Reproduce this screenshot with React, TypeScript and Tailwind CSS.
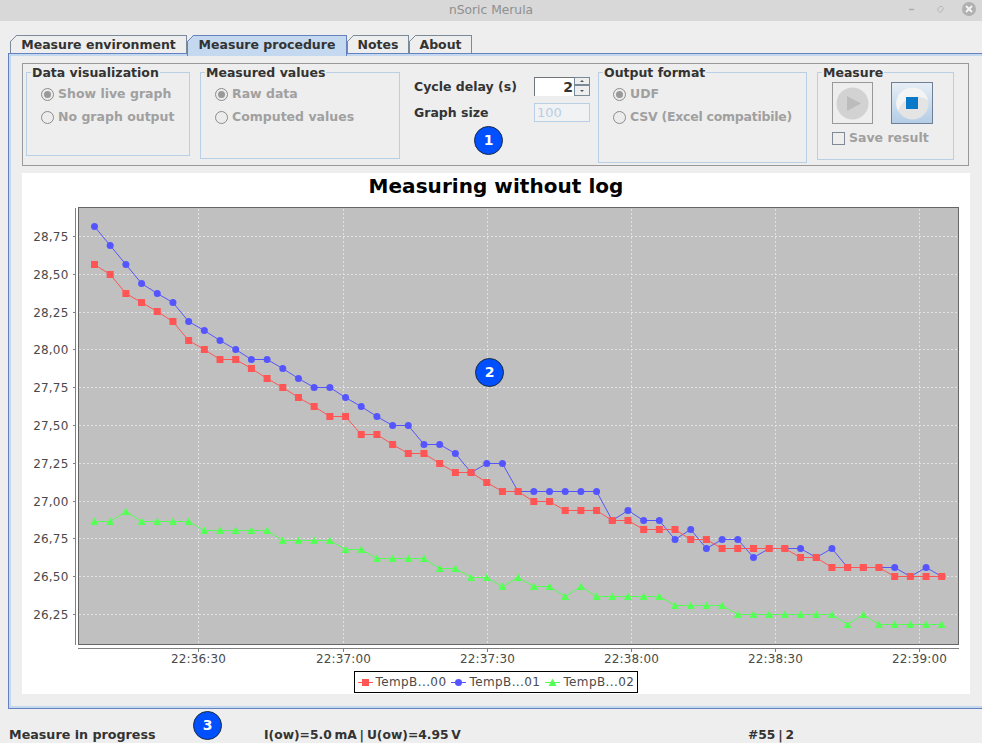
import React from "react";

const red = [264,274,293,302,311,321,340,349,359,359,368,378,387,397,406,416,416,434,434,444,453,453,463,472,472,482,491,491,501,501,510,510,510,520,520,529,529,529,539,539,548,548,548,548,548,557,557,567,567,567,567,576,576,576,576];
const blue = [226,245,264,283,293,302,321,330,340,349,359,359,368,378,387,387,397,406,416,425,425,444,444,453,472,463,463,491,491,491,491,491,491,520,510,520,520,539,529,548,539,539,557,548,548,548,557,548,567,567,567,567,576,567,576];
const green = [521,521,511,521,521,521,521,530,530,530,530,530,540,540,540,540,549,549,558,558,558,558,568,568,577,577,586,577,586,586,596,586,596,596,596,596,596,605,605,605,605,614,614,614,614,614,614,614,624,614,624,624,624,624,624];
const px = (i: number) => 94.5 + i * 15.69;
const pts = (a: number[]) => a.map((y, i) => `${px(i).toFixed(1)},${y + 0.5}`).join(" ");
const yLabels = ["28,75","28,50","28,25","28,00","27,75","27,50","27,25","27,00","26,75","26,50","26,25"];
const yTick = (i: number) => Math.round(236 + i * 37.8) + 0.5;
const xTicks: [number, string][] = [[198.5,"22:36:30"],[343.5,"22:37:00"],[487.5,"22:37:30"],[631.5,"22:38:00"],[775.5,"22:38:30"],[919.5,"22:39:00"]];
const tri = (x: number, y: number) => `${x},${y - 4} ${x + 4},${y + 3.5} ${x - 4},${y + 3.5}`;

function Radio({ label, checked, className }: { label: string; checked?: boolean; className?: string }) {
  return (
    <div className="flex items-center h-[23px] gap-[4px] text-[#a0a0a0] whitespace-nowrap">
      <span className="w-[13px] h-[13px] rounded-full border border-[#8c8c8c] flex items-center justify-center shrink-0 bg-[#ececec]">
        {checked && <span className="w-[7px] h-[7px] rounded-full bg-[#999999]" />}
      </span>
      <span className={className}>{label}</span>
    </div>
  );
}

function Group({ title, className, children }: { title: string; className: string; children?: React.ReactNode }) {
  return (
    <fieldset className={`border border-[#b8cfe5] shrink-0 ${className}`}>
      <legend className="ml-[4px] px-[1px] leading-[15px] text-[#333333]">{title}</legend>
      {children}
    </fieldset>
  );
}

function Tab({ label, className, active }: { label: string; className: string; active?: boolean }) {
  return (
    <div className={`relative shrink-0 flex justify-center border-l border-t border-r leading-[17px] text-[#333333] ${active ? "h-[21px] bg-[#c4d9f0] border-[#6382bf]" : "h-[18px] border-[#7a8a99]"} ${className}`}>
      <svg className="absolute -left-px -top-px" width="7" height="7" viewBox="0 0 7 7">
        <path d="M0 0H6.5L0 6.5Z" fill="#eeeeee" />
        <path d="M0.5 6.5L6.5 0.5" stroke={active ? "#6382bf" : "#7a8a99"} fill="none" />
      </svg>
      {label}
    </div>
  );
}

function Badge({ n, className }: { n: number; className: string }) {
  return (
    <div className={`absolute w-[29px] h-[29px] rounded-full bg-[#0050ff] border border-[#1a2a40] text-white text-[14px] font-bold flex items-center justify-center ${className}`}>
      {n}
    </div>
  );
}

function LegendItem({ kind, color, label }: { kind: "s" | "c" | "t"; color: string; label: string }) {
  return (
    <div className="flex items-center gap-[3px]">
      <svg width="15" height="9" viewBox="0 0 15 9">
        <path d="M0 4.5H15" stroke={color} />
        {kind === "s" && <rect x="4" y="1" width="7" height="7" fill={color} />}
        {kind === "c" && <circle cx="7.5" cy="4.5" r="3.5" fill={color} />}
        {kind === "t" && <polygon points="7.5,0.5 11.5,8 3.5,8" fill={color} />}
      </svg>
      <span>{label}</span>
    </div>
  );
}

export default function App() {
  return (
    <div className="relative w-[982px] h-[743px] overflow-hidden bg-[#eeeeee] font-['DejaVu_Sans',sans-serif] font-bold text-[12.5px] text-[#333333]">
      <div className="relative h-[21px] bg-[#d8d8d8] flex items-center justify-center font-normal text-[12.3px] text-[#8f8f8f]">
        nSoric Merula
        <svg className="absolute right-0 top-0" width="90" height="21" viewBox="0 0 90 21">
          <path d="M17 9.5H22" stroke="#adadad" strokeWidth="1.5" />
          <path d="M46 11V8.5L48 6.5H50.5M51 7.5V10L49 12H46.5" stroke="#b5b5b5" fill="none" />
          <circle cx="77" cy="9" r="7" fill="#b0b0b0" />
          <path d="M74 6L80 12M80 6L74 12" stroke="#f4f4f4" strokeWidth="2" />
        </svg>
      </div>

      <div className="relative z-10 mt-[14px] ml-[10px] flex items-start h-[18px]">
        <Tab label="Measure environment" className="w-[177px]" />
        <Tab label="Measure procedure" className="w-[160px]" active />
        <Tab label="Notes" className="w-[62px]" />
        <Tab label="About" className="w-[63px]" />
      </div>

      <div className="ml-[8px] w-[980px] h-[656px] border border-[#6382bf]">
        <div className="h-full border-2 border-[#c4d9f0] pl-[11px] pt-[7px]">
          <div className="w-[947px] h-[103px] border border-[#999999] flex items-start pl-[3px] pt-px">
            <Group title="Data visualization" className="w-[164px] h-[91px]">
              <div className="pt-[3px] pl-[14px]">
                <Radio label="Show live graph" checked />
                <Radio label="No graph output" />
              </div>
            </Group>
            <Group title="Measured values" className="ml-[10px] w-[200px] h-[94px]">
              <div className="pt-[3px] pl-[14px]">
                <Radio label="Raw data" checked />
                <Radio label="Computed values" />
              </div>
            </Group>
            <div className="ml-[14px] w-[176px] pt-[12px] shrink-0">
              <div className="flex items-center justify-between h-[19px]">
                <span className="pt-[2px]">Cycle delay (s)</span>
                <div className="flex w-[56px] h-[19px]">
                  <div className="w-[40px] bg-white border-l border-t border-[#70757c] text-right pr-px leading-[18px] text-[14px]">2</div>
                  <div className="w-[16px] flex flex-col border border-[#7a8a99] bg-[#eeeeee]">
                    <div className="h-[8px] border-b-2 border-[#7a8a99] flex items-center justify-center">
                      <span className="w-0 h-0 border-x-[2px] border-x-transparent border-b-[2px] border-b-[#555555]" />
                    </div>
                    <div className="flex-1 flex items-center justify-center">
                      <span className="w-0 h-0 border-x-[2px] border-x-transparent border-t-[2px] border-t-[#555555]" />
                    </div>
                  </div>
                </div>
              </div>
              <div className="flex items-center justify-between h-[19px] mt-[7px]">
                <span className="pt-[2px]">Graph size</span>
                <div className="w-[56px] h-[19px] bg-[#f0f2f4] border border-[#b8cfe5] pl-[2px] font-normal text-[13px] leading-[17px] text-[#b8cfe5]">100</div>
              </div>
            </div>
            <Group title="Output format" className="ml-[8px] w-[209px] h-[98px]">
              <div className="pt-[3px] pl-[14px]">
                <Radio label="UDF" checked />
                <Radio label="CSV (Excel compatibile)" className="tracking-[-0.25px]" />
              </div>
            </Group>
            <Group title="Measure" className="ml-[10px] w-[137px] h-[95px]">
              <div className="pl-[14px]">
                <div className="flex gap-[18px] pt-[2px]">
                  <div className="w-[41px] h-[42px] border border-[#999999] flex items-center justify-center">
                    <svg width="33" height="33" viewBox="0 0 33 33">
                      <circle cx="16.5" cy="16.5" r="16" fill="#d2d2d2" />
                      <path d="M11 9L25 16.5L11 24Z" fill="#bcbcbc" />
                    </svg>
                  </div>
                  <div className="w-[42px] h-[42px] border border-[#6e7f96] bg-gradient-to-b from-[#e6eef6] to-[#b4cde6] flex items-center justify-center">
                    <svg width="33" height="33" viewBox="0 0 33 33">
                      <circle cx="16.5" cy="16.5" r="16" fill="#e4e4e4" />
                      <path d="M16.5 0.5A16 16 0 0 0 2 24A20 20 0 0 1 32 13A16 16 0 0 0 16.5 0.5Z" fill="#f4f4f4" />
                      <rect x="10" y="10" width="12" height="12" fill="#0a78c8" />
                    </svg>
                  </div>
                </div>
                <div className="flex items-center gap-[4px] mt-[5px] text-[#a0a0a0]">
                  <span className="w-[13px] h-[13px] border border-[#7f8a96] bg-[#eeeeee]" />
                  <span>Save result</span>
                </div>
              </div>
            </Group>
          </div>

          <div className="mt-[7px] w-[948px] h-[521px] bg-white flex flex-col items-center">
            <div className="h-[25px] mb-[2px] flex items-center text-[20px] tracking-[0.05px] text-black">Measuring without log</div>
            <svg width="948" height="466" viewBox="22 200 948 466" className="font-normal shrink-0">
              <rect x="78.5" y="207.5" width="880" height="437" fill="#c0c0c0" stroke="#666666" />
              {yLabels.map((_, i) => (
                <line key={i} x1="79" x2="958" y1={yTick(i)} y2={yTick(i)} stroke="#e2e2e2" strokeDasharray="2 2" />
              ))}
              {xTicks.map(([x]) => (
                <line key={x} x1={x} x2={x} y1="209" y2="644" stroke="#e2e2e2" strokeDasharray="2 2" />
              ))}
              <path d="M75.5 208V645" stroke="#808080" />
              <path d="M78 648.5H959" stroke="#808080" />
              {yLabels.map((l, i) => (
                <g key={l}>
                  <path d={`M73 ${yTick(i)}H75`} stroke="#808080" />
                  <text x="68.5" y={yTick(i) + 4.5} textAnchor="end" fontSize="12" fill="#4a4a4a" letterSpacing="0.2">{l}</text>
                </g>
              ))}
              {xTicks.map(([x, l]) => (
                <g key={l}>
                  <path d={`M${x} 649V652`} stroke="#808080" />
                  <text x={x} y="663" textAnchor="middle" fontSize="12" fill="#4a4a4a" letterSpacing="0.15">{l}</text>
                </g>
              ))}
              <polyline points={pts(green)} fill="none" stroke="#55ff55" />
              {green.map((y, i) => <polygon key={i} points={tri(px(i), y + 0.5)} fill="#55ff55" />)}
              <polyline points={pts(blue)} fill="none" stroke="#5555ff" />
              {blue.map((y, i) => <circle key={i} cx={px(i)} cy={y + 0.5} r="3.5" fill="#5555ff" />)}
              <polyline points={pts(red)} fill="none" stroke="#ff5555" />
              {red.map((y, i) => <rect key={i} x={px(i) - 3.5} y={y - 3} width="7" height="7" fill="#ff5555" />)}
            </svg>
            <div className="mt-[5px] -ml-[1px] w-[284px] h-[22px] border border-black flex items-center gap-[5px] pl-[3px] font-normal text-[12px] text-[#4a4a4a] tracking-[0.4px]">
              <LegendItem kind="s" color="#ff5555" label="TempB...00" />
              <LegendItem kind="c" color="#5555ff" label="TempB...01" />
              <LegendItem kind="t" color="#55ff55" label="TempB...02" />
            </div>
          </div>
        </div>
      </div>

      <div className="flex items-center h-[34px] pt-[18px] pl-[9px] text-[12.3px] [word-spacing:-1.5px]">
        <span className="w-[255px] shrink-0 text-[12.7px] [word-spacing:0]">Measure in progress</span>
        <span className="w-[484px] shrink-0">I(ow)=5.0 mA | U(ow)=4.95 V</span>
        <span>#55 | 2</span>
      </div>

      <Badge n={1} className="left-[474px] top-[126px]" />
      <Badge n={2} className="left-[475px] top-[358px]" />
      <Badge n={3} className="left-[193px] top-[711px]" />
    </div>
  );
}
